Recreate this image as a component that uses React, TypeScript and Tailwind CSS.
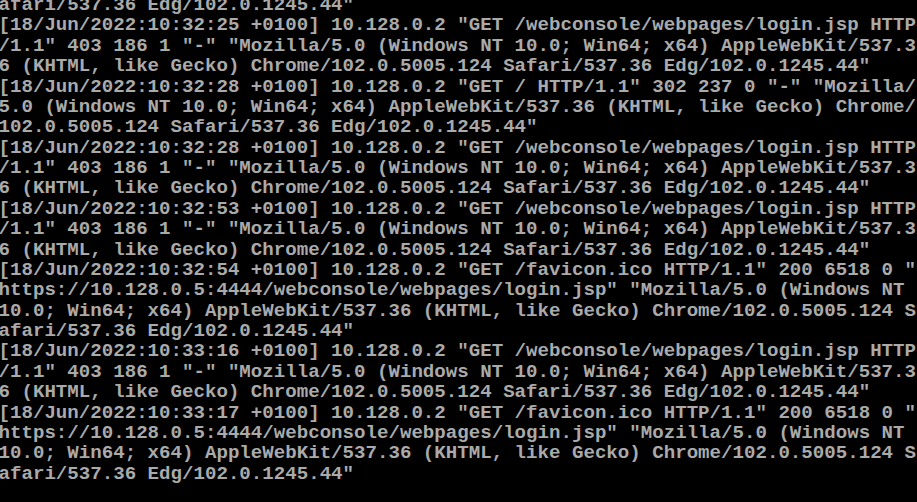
const UA = '"Mozilla/5.0 (Windows NT 10.0; Win64; x64) AppleWebKit/537.36 (KHTML, like Gecko) Chrome/102.0.5005.124 Safari/537.36 Edg/102.0.1245.44"'

const entries = [
  { time: '10:32:25', req: '"GET /webconsole/webpages/login.jsp HTTP/1.1" 403 186 1 "-" ' },
  { time: '10:32:28', req: '"GET / HTTP/1.1" 302 237 0 "-" ' },
  { time: '10:32:28', req: '"GET /webconsole/webpages/login.jsp HTTP/1.1" 403 186 1 "-" ' },
  { time: '10:32:53', req: '"GET /webconsole/webpages/login.jsp HTTP/1.1" 403 186 1 "-" ' },
  { time: '10:32:54', req: '"GET /favicon.ico HTTP/1.1" 200 6518 0 "https://10.128.0.5:4444/webconsole/webpages/login.jsp" ' },
  { time: '10:33:16', req: '"GET /webconsole/webpages/login.jsp HTTP/1.1" 403 186 1 "-" ' },
  { time: '10:33:17', req: '"GET /favicon.ico HTTP/1.1" 200 6518 0 "https://10.128.0.5:4444/webconsole/webpages/login.jsp" ' },
]

// wrap the log at 80 columns like the linux console does
const wrap = (s: string) => {
  const out: string[] = []
  for (let i = 0; i < s.length; i += 80) out.push(s.slice(i, i + 80))
  return out
}

const rows: string[] = ['afari/537.36 Edg/102.0.1245.44"']
entries.forEach((e) => {
  rows.push(...wrap(`[18/Jun/2022:${e.time} +0100] 10.128.0.2 ${e.req}${UA}`))
})
rows.push('')

const Row = ({ text }: { text: string }) => (
  <div className="grid grid-cols-[repeat(80,11.47px)] h-[20.38px] leading-[20.38px]">
    {text.split('').map((c, i) => (
      <span key={i} className="whitespace-pre text-left">{c}</span>
    ))}
  </div>
)

const App = () => {
  return (
    <div className="w-[917px] h-[502px] overflow-hidden bg-black">
      <div className="-mt-[5px] -ml-[1.5px] font-['Liberation_Mono',monospace] font-bold text-[19.1px] text-[#aaaaaa]">
        {rows.map((r, i) => (
          <Row key={i} text={r} />
        ))}
      </div>
    </div>
  )
}

export default App
